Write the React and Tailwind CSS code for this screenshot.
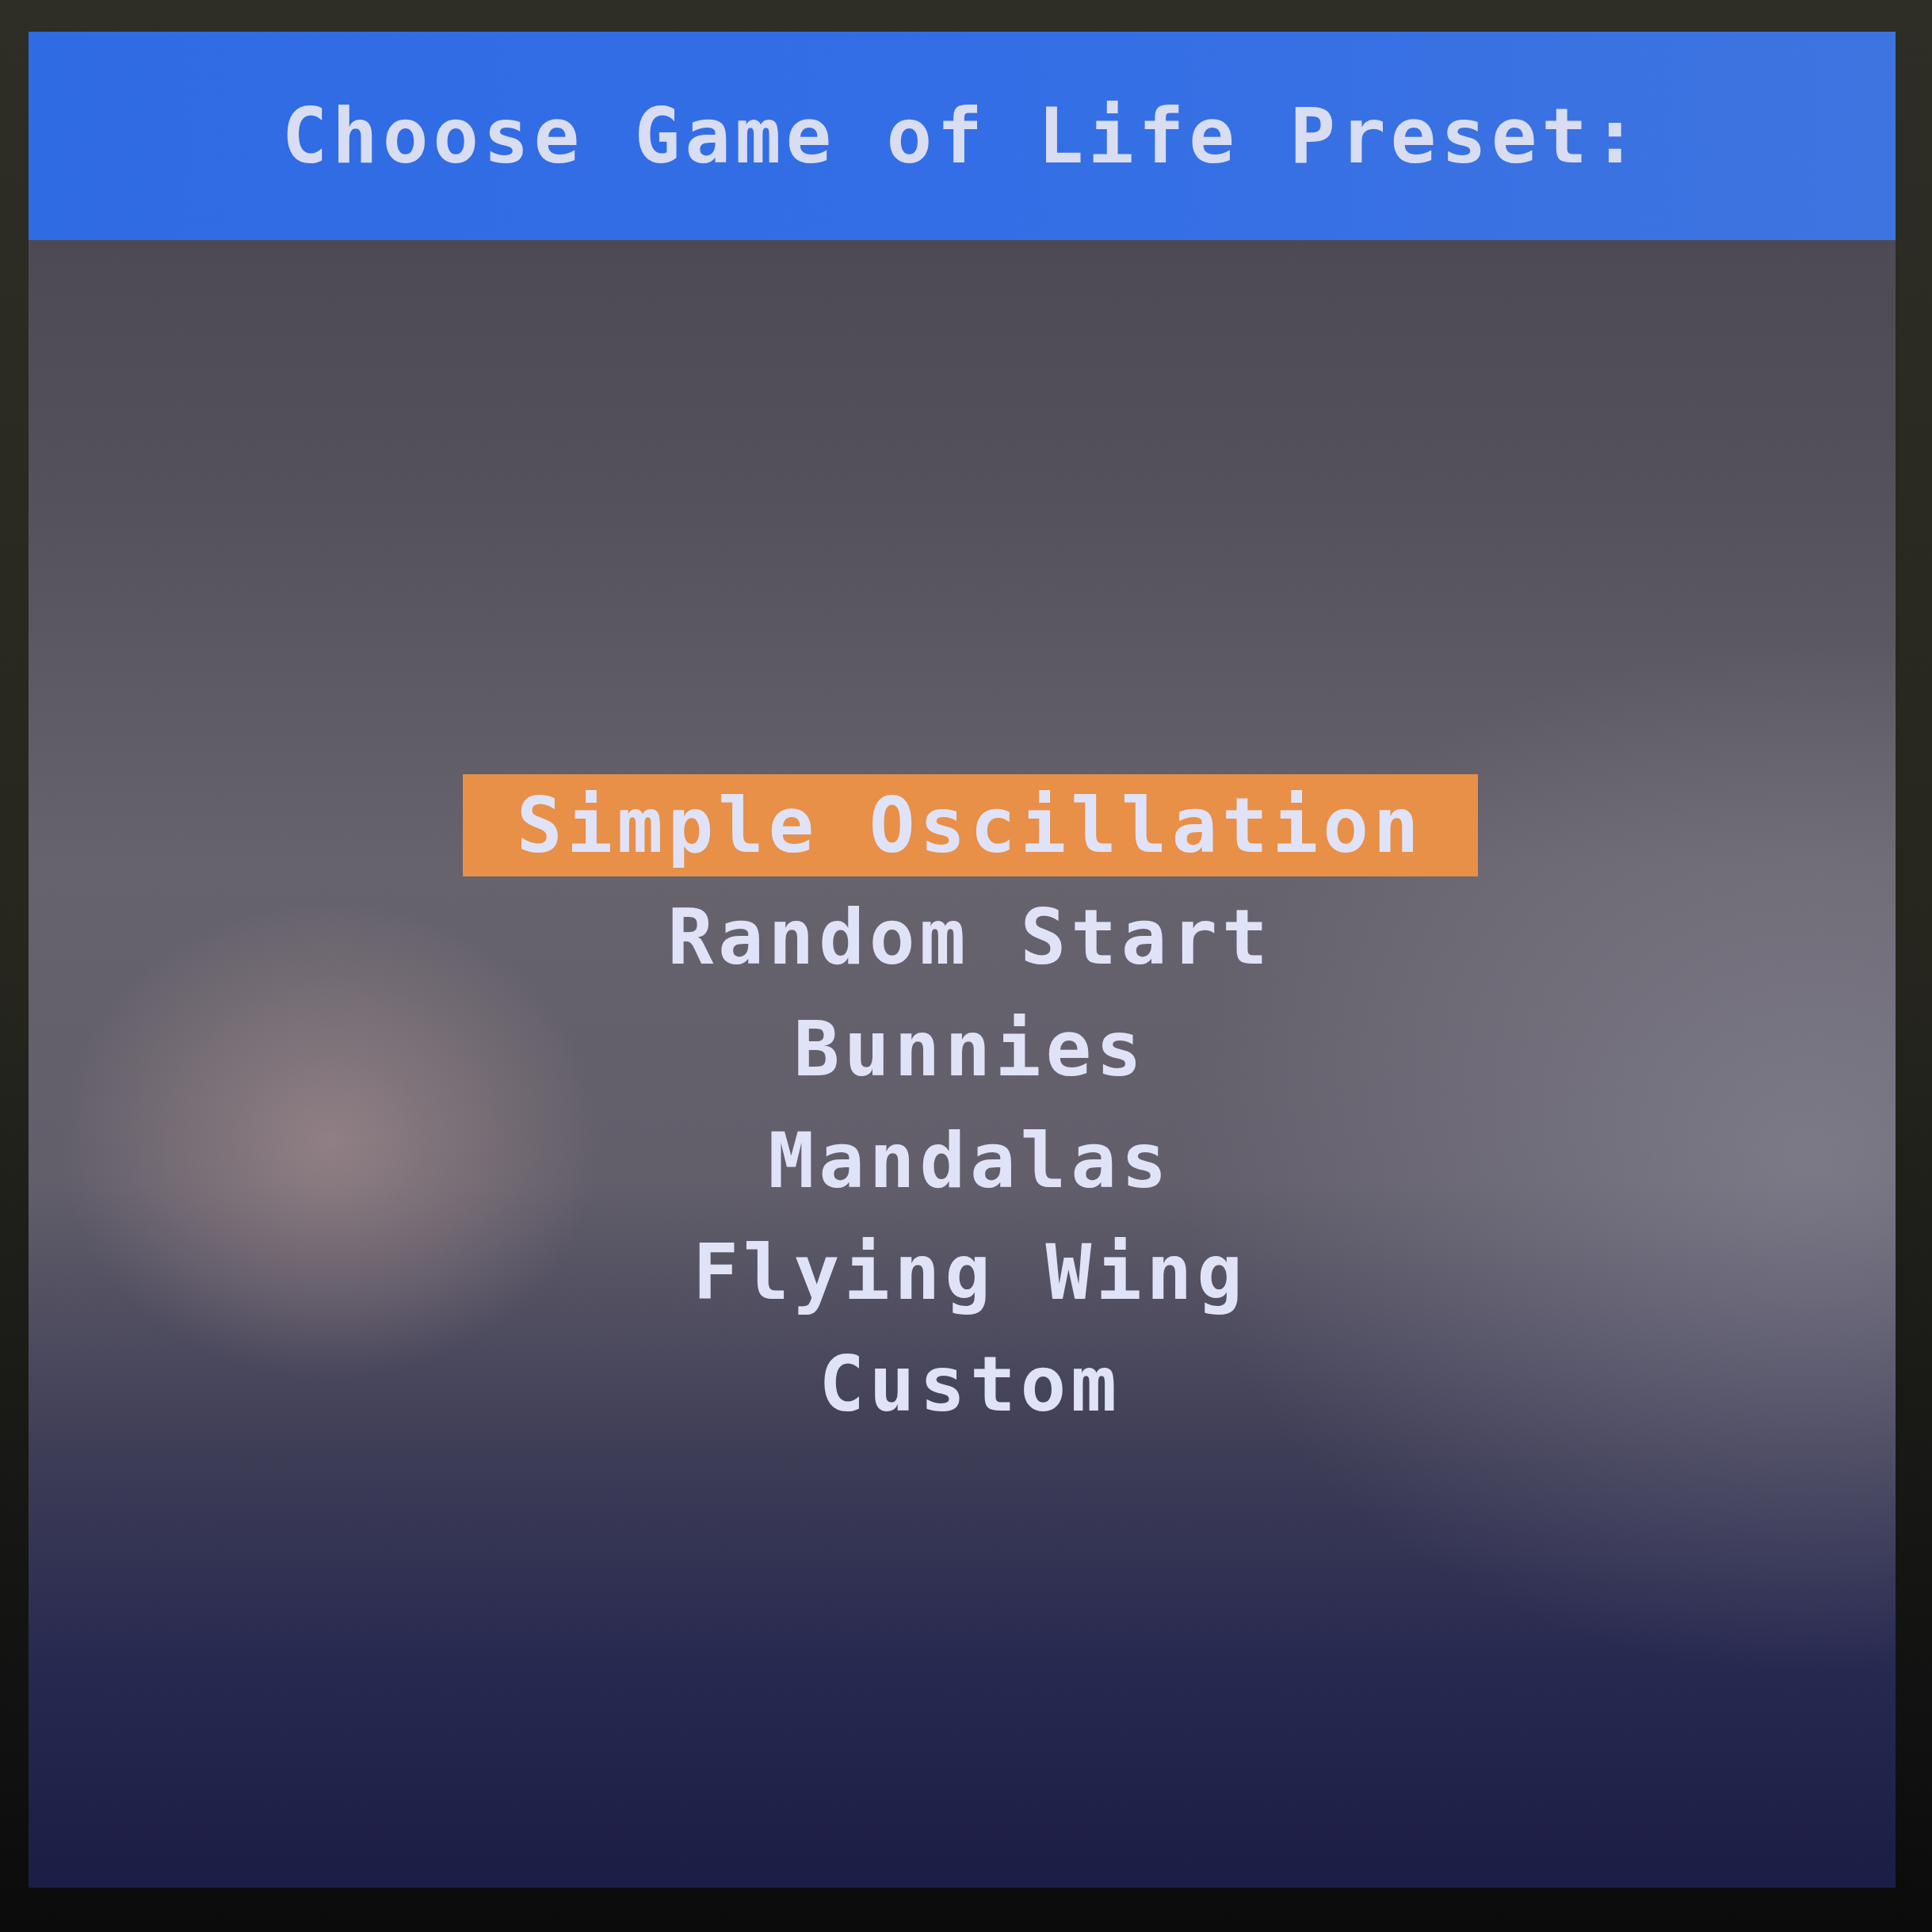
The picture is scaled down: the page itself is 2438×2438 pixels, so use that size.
import React from 'react';

const presets = ['Simple Oscillation', 'Random Start', 'Bunnies', 'Mandalas', 'Flying Wing', 'Custom'];

const App = () => {
  const selected = 0;

  return (
    <div className="w-[2438px] h-[2438px] bg-[linear-gradient(180deg,#2e2d26_0%,#26261f_50%,#101110_90%,#0a0b0a_100%)] pt-[40px] pl-[36px] pr-[46px] pb-[56px]">
      <div className="w-full h-full flex flex-col bg-[radial-gradient(ellipse_340px_300px_at_380px_1400px,rgba(175,150,150,0.6),rgba(175,150,150,0)),radial-gradient(ellipse_800px_650px_at_2250px_1420px,rgba(155,155,170,0.45),rgba(155,155,170,0)),linear-gradient(180deg,#47444e_0%,#55515c_25%,#67636d_45%,#625e6a_62%,#3f3e57_76%,#272950_88%,#1c1d46_100%)]">
        {/* Header */}
        <div className="h-[263px] bg-[linear-gradient(90deg,#2f6be2_0%,#336ee6_50%,#3e74e0_100%)] flex items-center justify-center">
          <h1 className="font-['DejaVu_Sans_Mono',monospace] font-bold text-[96px] leading-none tracking-[5.8px] text-[#d9ddf2] whitespace-pre">
            Choose Game of Life Preset:
          </h1>
        </div>

        {/* Menu */}
        <div className="flex flex-col items-center pt-[674px] pl-[20px] gap-[12px]">
          {presets.map((name, i) => (
            <div
              key={name}
              className={`h-[129px] flex items-center justify-center font-['DejaVu_Sans_Mono',monospace] font-bold text-[96px] leading-none tracking-[5.8px] whitespace-pre text-[#e0e3f8] ${
                i === selected ? 'bg-[#e88f48] w-[1281px]' : ''
              }`}
            >
              {name}
            </div>
          ))}
        </div>
      </div>
    </div>
  );
};

export default App;
